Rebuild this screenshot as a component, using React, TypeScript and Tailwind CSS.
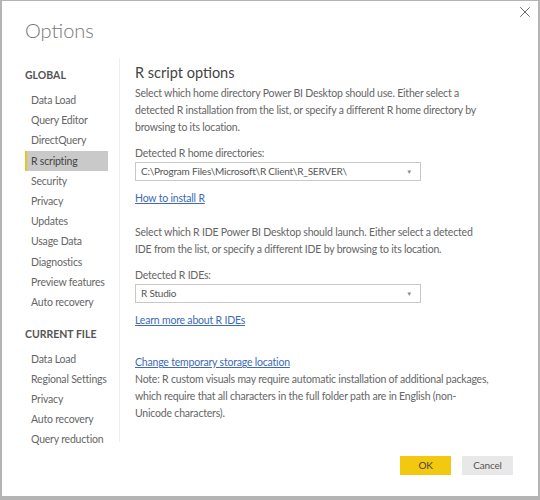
import { X } from "lucide-react";

const globalItems = [
  "Data Load",
  "Query Editor",
  "DirectQuery",
  "R scripting",
  "Security",
  "Privacy",
  "Updates",
  "Usage Data",
  "Diagnostics",
  "Preview features",
  "Auto recovery",
];

const fileItems = ["Data Load", "Regional Settings", "Privacy", "Auto recovery", "Query reduction"];

function NavItem({ label, active }: { label: string; active?: boolean }) {
  return (
    <div
      className={
        active
          ? "h-[20.2px] w-[83px] border-l-2 border-[#e8c51c] bg-[#c9c9c9] pl-[4px] leading-[20px] text-[#444]"
          : "h-[20.2px] whitespace-nowrap pl-[6px] leading-[20px] text-[#666]"
      }
    >
      {label}
    </div>
  );
}

function Select({ value }: { value: string }) {
  return (
    <div className="flex h-[19px] w-[286px] items-center justify-between border border-[#c8c8c8] bg-white pl-[5px] pr-[8px] text-[10px] text-[#555]">
      <span>{value}</span>
      <span className="text-[6px] text-[#888]">▼</span>
    </div>
  );
}

export default function App() {
  return (
    <div
      className="h-[500px] w-[540px] border-x-2 border-t border-b-4 border-[#b4b4b4] bg-white text-[10.5px] tracking-[-0.2px]"
      style={{ fontFamily: "Lato, 'Open Sans', sans-serif" }}
    >
      <div className="flex h-[49px] items-start justify-between">
        <h1 className="ml-[23px] mt-[16px] text-[20px] font-light leading-[26px] tracking-normal text-[#777]">
          Options
        </h1>
        <X className="mr-[4px] mt-[2px] h-[18px] w-[18px] text-[#666]" strokeWidth={1.3} />
      </div>

      <div className="flex h-[392px] items-start">
        <div className="ml-[23px] mt-[8px] h-[384px] w-[95px] border-r border-[#eee]">
          <div className="mt-[11px] mb-[8px] text-[10.5px] font-bold leading-[13px] tracking-normal text-[#555]">
            GLOBAL
          </div>
          {globalItems.map((i) => (
            <NavItem key={i} label={i} active={i === "R scripting"} />
          ))}
          <div className="mt-[16px] mb-[7.5px] text-[10.5px] font-bold leading-[13px] tracking-normal text-[#555]">
            CURRENT FILE
          </div>
          {fileItems.map((i) => (
            <NavItem key={i + "f"} label={i} />
          ))}
        </div>

        <div className="ml-[15px] w-[355px] leading-[17px] text-[#666]">
          <div className="mt-[12px] text-[14.5px] leading-[22px] tracking-normal text-[#444]">R script options</div>
          <p className="mt-[1px]">
            Select which home directory Power BI Desktop should use. Either select a detected R installation from the
            list, or specify a different R home directory by browsing to its location.
          </p>
          <div className="mt-[10px] leading-[15px]">Detected R home directories:</div>
          <div className="mt-[1px]">
            <Select value={"C:\\Program Files\\Microsoft\\R Client\\R_SERVER\\"} />
          </div>
          <div className="mt-[9px] text-[#3d6bb5] underline">How to install R</div>
          <p className="mt-[17px]">
            Select which R IDE Power BI Desktop should launch. Either select a detected IDE from the list, or specify
            a different IDE by browsing to its location.
          </p>
          <div className="mt-[10px] leading-[15px]">Detected R IDEs:</div>
          <div className="mt-[1px]">
            <Select value="R Studio" />
          </div>
          <div className="mt-[9px] text-[#3d6bb5] underline">Learn more about R IDEs</div>
          <div className="mt-[25px] text-[#3d6bb5] underline">Change temporary storage location</div>
          <p>
            Note: R custom visuals may require automatic installation of additional packages, which require that all
            characters in the full folder path are in English (non-Unicode characters).
          </p>
        </div>
      </div>

      <div className="mt-[14px] flex justify-end gap-[11px] pr-[25px]">
        <button className="h-[19px] w-[51px] bg-[#f2c811] text-[10px] text-[#444]">OK</button>
        <button className="h-[19px] w-[51px] bg-[#e8e8e8] text-[10px] text-[#555]">Cancel</button>
      </div>
    </div>
  );
}
